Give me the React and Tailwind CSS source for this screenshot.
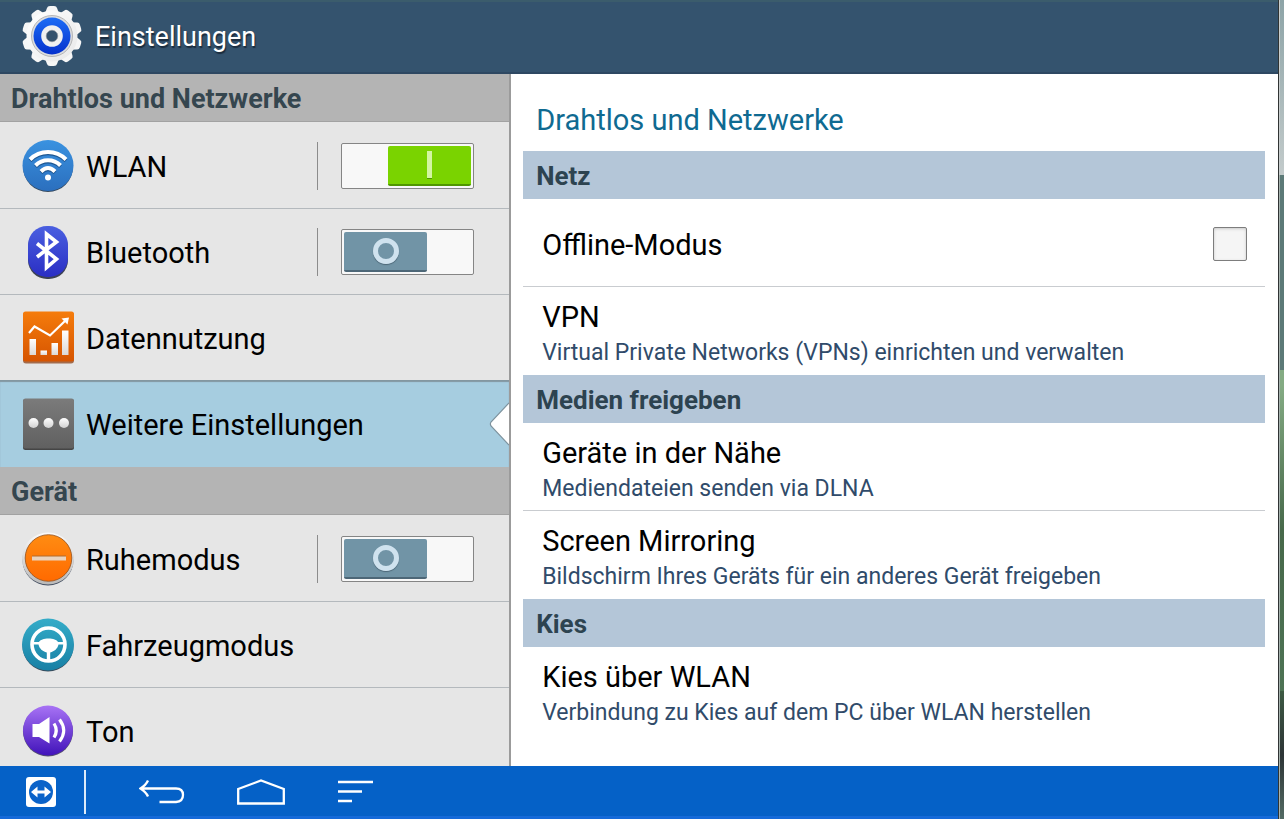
import React, { useState } from "react";

const WlanIcon = () => (
  <svg viewBox="0 0 52 54" className="h-[54px] w-[52px]" aria-hidden="true">
    <defs>
      <linearGradient id="wlan" x1="0" y1="0" x2="0" y2="1">
        <stop offset="0" stopColor="#3a92e0" />
        <stop offset="1" stopColor="#2b6fbe" />
      </linearGradient>
    </defs>
    <circle cx="26" cy="28" r="25" fill="#34495f" />
    <circle cx="26" cy="26.5" r="25.500" fill="url(#wlan)" />
    <g fill="none" stroke="#1d5590" strokeWidth="4" transform="translate(0 1.2)">
      <path d="M8 20.500C18 10.500 34 10.500 44 20.500" />
      <path d="M13.500 26.500C20.500 19.500 31.500 19.500 38.500 26.500" />
      <path d="M19 32.500C23.500 28 28.500 28 33 32.500" />
    </g>
    <g fill="none" stroke="#fff" strokeWidth="4">
      <path d="M8 20.500C18 10.500 34 10.500 44 20.500" />
      <path d="M13.500 26.500C20.500 19.500 31.500 19.500 38.500 26.500" />
      <path d="M19 32.500C23.500 28 28.500 28 33 32.500" />
    </g>
    <circle cx="26" cy="38.500" r="3" fill="#fff" />
  </svg>
);

const BluetoothIcon = () => (
  <svg viewBox="0 0 52 54" className="h-[54px] w-[52px]" aria-hidden="true">
    <defs>
      <linearGradient id="bt" x1="0" y1="0" x2="0" y2="1">
        <stop offset="0" stopColor="#4a5fe0" />
        <stop offset="1" stopColor="#2a2ec4" />
      </linearGradient>
    </defs>
    <rect x="6" y="3" width="40" height="51" rx="19" fill="#3c4254" />
    <rect x="6" y="1" width="40" height="51" rx="19" fill="url(#bt)" />
    <path d="M15 18.500L34.500 34 24.500 42.500V9L34.500 17 15 32" fill="none" stroke="#fff" strokeWidth="3.600" />
  </svg>
);

const DataIcon = () => (
  <svg viewBox="0 0 52 54" className="h-[54px] w-[52px]" aria-hidden="true">
    <defs>
      <linearGradient id="data" x1="0" y1="0" x2="0" y2="1">
        <stop offset="0" stopColor="#f57c0c" />
        <stop offset="1" stopColor="#d65400" />
      </linearGradient>
      <linearGradient id="bars" x1="0" y1="0" x2="0" y2="1">
        <stop offset="0" stopColor="#fff" />
        <stop offset="1" stopColor="#dcd8d6" />
      </linearGradient>
    </defs>
    <rect x="1" y="1.500" width="51" height="51" rx="3" fill="#a36b4b" />
    <rect x="1" y=".500" width="51" height="50" rx="2.500" fill="url(#data)" />
    <g fill="url(#bars)">
      <rect x="7.500" y="28" width="6.500" height="16" />
      <rect x="18.500" y="39.500" width="6.500" height="4.500" />
      <rect x="29.500" y="32" width="6.500" height="12" />
      <rect x="40" y="19.500" width="6.500" height="24.500" />
    </g>
    <path d="M7 22L12.500 15.500 28 24.500 44 9" fill="none" stroke="#fff" strokeWidth="2.200" />
    <path d="M47 6.500L45.500 13.500 39.500 7.500Z" fill="#fff" />
  </svg>
);

const MoreIcon = () => (
  <svg viewBox="0 0 52 54" className="h-[54px] w-[52px]" aria-hidden="true">
    <defs>
      <linearGradient id="more" x1="0" y1="0" x2="0" y2="1">
        <stop offset="0" stopColor="#7b7b7b" />
        <stop offset="1" stopColor="#606060" />
      </linearGradient>
      <linearGradient id="dots" x1="0" y1="0" x2="0" y2="1">
        <stop offset="0" stopColor="#fff" />
        <stop offset="1" stopColor="#d2d2d2" />
      </linearGradient>
    </defs>
    <rect x="1" y="2" width="51" height="51" rx="2.500" fill="#454545" />
    <rect x="1" y="1.500" width="51" height="50" rx="2.500" fill="url(#more)" />
    <circle cx="11.500" cy="26" r="5" fill="url(#dots)" />
    <circle cx="26.500" cy="26" r="5" fill="url(#dots)" />
    <circle cx="42" cy="26" r="5" fill="url(#dots)" />
  </svg>
);

const BlockIcon = () => (
  <svg viewBox="0 0 52 54" className="h-[54px] w-[52px]" aria-hidden="true">
    <defs>
      <linearGradient id="block" x1="0" y1="0" x2="0" y2="1">
        <stop offset="0" stopColor="#ff8c12" />
        <stop offset="1" stopColor="#ff6a00" />
      </linearGradient>
      <linearGradient id="rim" x1="0" y1="0" x2="0" y2="1">
        <stop offset="0" stopColor="#fafafa" />
        <stop offset="1" stopColor="#b9b9b9" />
      </linearGradient>
    </defs>
    <circle cx="26" cy="28" r="25.500" fill="#424d60" />
    <circle cx="26" cy="26.500" r="26" fill="url(#rim)" />
    <circle cx="26.500" cy="26" r="23.300" fill="url(#block)" stroke="#94501c" strokeWidth=".8" />
    <rect x="10" y="24" width="34" height="4.500" fill="#e9d2bd" />
    <rect x="10" y="23.500" width="34" height="1" fill="#b36a2a" />
  </svg>
);

const WheelIcon = () => (
  <svg viewBox="0 0 52 54" className="h-[54px] w-[52px]" aria-hidden="true">
    <defs>
      <linearGradient id="wheel" x1="0" y1="0" x2="0" y2="1">
        <stop offset="0" stopColor="#35acc8" />
        <stop offset="1" stopColor="#1880a5" />
      </linearGradient>
    </defs>
    <circle cx="26" cy="28" r="25.500" fill="#394a5a" />
    <circle cx="26" cy="26.500" r="26" fill="url(#wheel)" />
    <circle cx="26.500" cy="26.500" r="16.500" fill="none" stroke="#fff" strokeWidth="3.600" />
    <path d="M10 24H17C18 22 22 20.500 26.500 20.500S35 22 36 24H43V26.500H36.500C35.500 31 32.500 33 28.200 34.500V42H24.800V34.500C20.500 33 17.500 31 16.500 26.500H10Z" fill="#fff" />
  </svg>
);

const SoundIcon = () => (
  <svg viewBox="0 0 52 54" className="h-[54px] w-[52px]" aria-hidden="true">
    <defs>
      <linearGradient id="sound" x1="0" y1="0" x2="0" y2="1">
        <stop offset="0" stopColor="#a873f5" />
        <stop offset="1" stopColor="#4113ba" />
      </linearGradient>
    </defs>
    <circle cx="26" cy="27.500" r="25" fill="#555070" />
    <circle cx="26" cy="26.500" r="25" fill="url(#sound)" />
    <path d="M10.500 20H17L27.500 13V39.500L17 33H10.500Z" fill="#fff" />
    <path d="M32 19.500Q36.500 26.500 32 33.500M37.500 15.500Q46 26.500 37.500 37.500" fill="none" stroke="#fff" strokeWidth="3.200" />
  </svg>
);

const GearIcon = () => (
  <svg viewBox="0 0 60 62" className="h-[62px] w-[60px]" aria-hidden="true">
    <defs>
      <linearGradient id="gear" x1="0" y1="0" x2="1" y2="1">
        <stop offset="0" stopColor="#fff" />
        <stop offset="1" stopColor="#e8e8e8" />
      </linearGradient>
      <linearGradient id="gearBlue" x1="0" y1="0" x2="0" y2="1">
        <stop offset="0" stopColor="#1d6cf5" />
        <stop offset="1" stopColor="#0531cd" />
      </linearGradient>
    </defs>
    <g fill="#f6f6f6">
      {[0, 36, 72, 108, 144, 180, 216, 252, 288, 324].map((angle) => (
        <path key={angle} d="M22 10L25 2Q25.500 0 28 0H32Q34.500 0 35 2L38 10Z" transform={`rotate(${angle} 30 30)`} />
      ))}
    </g>
    <circle cx="30" cy="30" r="25.500" fill="url(#gear)" />
    <circle cx="30" cy="30" r="20.500" fill="#dcdddf" stroke="#a8a8a8" strokeWidth=".8" />
    <circle cx="30" cy="30" r="18.500" fill="url(#gearBlue)" />
    <circle cx="30" cy="30" r="8.300" fill="#34516c" stroke="#f0f0f0" strokeWidth="5" />
    <circle cx="30" cy="30" r="5.800" fill="#34516c" stroke="#a5a8ad" strokeWidth=".7" />
  </svg>
);

const deviceSections = [
  {
    title: "Drahtlos und Netzwerke",
    items: [
      { id: "wlan", label: "WLAN", icon: WlanIcon, toggle: true },
      { id: "bluetooth", label: "Bluetooth", icon: BluetoothIcon, toggle: true },
      { id: "daten", label: "Datennutzung", icon: DataIcon },
      { id: "weitere", label: "Weitere Einstellungen", icon: MoreIcon, active: true },
    ],
  },
  {
    title: "Gerät",
    items: [
      { id: "ruhemodus", label: "Ruhemodus", icon: BlockIcon, toggle: true },
      { id: "fahrzeug", label: "Fahrzeugmodus", icon: WheelIcon },
      { id: "ton", label: "Ton", icon: SoundIcon },
    ],
  },
];

const detailSections = [
  {
    title: "Netz",
    items: [
      { label: "Offline-Modus", checkbox: true },
      { label: "VPN", text: "Virtual Private Networks (VPNs) einrichten und verwalten" },
    ],
  },
  {
    title: "Medien freigeben",
    items: [
      { label: "Geräte in der Nähe", text: "Mediendateien senden via DLNA" },
      { label: "Screen Mirroring", text: "Bildschirm Ihres Geräts für ein anderes Gerät freigeben" },
    ],
  },
  {
    title: "Kies",
    items: [{ label: "Kies über WLAN", text: "Verbindung zu Kies auf dem PC über WLAN herstellen" }],
  },
];

function Toggle({ id, label, checked, onChange }) {
  return (
    <div className="flex h-12 items-center border-l border-[#8c8c8c] pl-[23px]">
      <label htmlFor={id} className="relative block h-[46px] w-[133px] cursor-pointer">
        <input
          id={id}
          type="checkbox"
          role="switch"
          aria-label={label}
          checked={checked}
          onChange={onChange}
          className="block h-full w-full appearance-none rounded-xs border border-[#858585] bg-[#f8f8f8]"
        />
        {checked ? (
          <span className="pointer-events-none absolute top-[3px] right-[3px] flex h-10 w-[83px] items-center justify-center rounded-xs border-b-2 border-[#4f9600] bg-[#7ad300]">
            <span className="h-7 w-[5px] border-b border-[#4f9600] bg-[#d3f5a2]" />
          </span>
        ) : (
          <span className="pointer-events-none absolute top-[3px] left-[3px] flex h-10 w-[83px] items-center justify-center rounded-xs border-b-2 border-[#4d6777] bg-[#7194a6]">
            <span className="size-[26px] rounded-full border-5 border-[#cfe2ee] shadow-[0_1px_1px_#4d6777]" />
          </span>
        )}
      </label>
    </div>
  );
}

function SidebarItem({ item, checked, onToggle }) {
  const Icon = item.icon;

  return (
    <li
      className={
        item.active
          ? "relative flex h-[87px] items-center bg-[#a6cde0] pr-[35px] pl-[22px] shadow-[inset_0_2px_1px_#8397a1]"
          : "flex h-[86px] items-center border-t border-[#b4b9bd] pr-[35px] pl-[22px] first:border-transparent"
      }
    >
      <a href={`#${item.id}`} className="flex flex-1 items-center gap-3">
        <Icon />
        <span className="pt-0.5 text-[29px] leading-9 text-black">{item.label}</span>
      </a>
      {item.toggle && (
        <Toggle id={`${item.id}-switch`} label={item.label} checked={checked} onChange={onToggle} />
      )}
      {item.active && (
        <svg viewBox="0 0 20 44" className="absolute right-0 h-11 w-5" aria-hidden="true">
          <path d="M20 1L2 20Q.800 22 2 24L20 43" fill="#fff" stroke="#7d929d" strokeWidth="1.200" />
        </svg>
      )}
    </li>
  );
}

function DetailItem({ item, checked, onChange }) {
  if (item.checkbox) {
    return (
      <li className="flex h-[88px] items-center justify-between border-b border-[#c9ccd0] pt-0.5 pr-[18px] pl-[19px]">
        <label htmlFor="offline" className="pt-0.5 text-[29px] leading-9 text-black">
          {item.label}
        </label>
        <input
          id="offline"
          type="checkbox"
          checked={checked}
          onChange={onChange}
          className="size-[34px] appearance-none rounded-xs border border-[#7d7d7d] bg-[#f5f5f5] shadow-[inset_0_1px_3px_#c8c8c8] checked:bg-[#7ad300]"
        />
      </li>
    );
  }

  return (
    <li className="h-[88px] border-b border-[#c9ccd0] pt-[13px] pl-[19px] last:border-b-0">
      <a href="#detail" className="block">
        <span className="block text-[29px] leading-[35px] text-black">{item.label}</span>
        <span className="block text-[23px] leading-[35px] text-[#304b6a]">{item.text}</span>
      </a>
    </li>
  );
}

export default function App() {
  const [switches, setSwitches] = useState({ wlan: true, bluetooth: false, ruhemodus: false });
  const [offline, setOffline] = useState(false);

  const toggleSwitch = (id) => {
    setSwitches((prev) => ({ ...prev, [id]: !prev[id] }));
  };

  return (
    <div className="flex h-screen overflow-hidden font-[Roboto,sans-serif]">
      <div className="flex min-w-0 flex-1 flex-col">
        <header className="flex h-[74px] shrink-0 items-center gap-[13px] border-t-2 border-b-2 border-t-[#3b5c6c] border-b-[#2e4862] bg-[#34536e] pl-[22px]">
          <GearIcon />
          <h1 className="text-[27px] leading-9 text-white [text-shadow:1px_2px_1px_#1b2c3d]">Einstellungen</h1>
        </header>

        <div className="flex min-h-0 flex-1">
          <nav className="w-2/5 shrink-0 overflow-hidden border-r-2 border-[#9b9b9b] bg-[#e6e6e6]" aria-label="Einstellungen">
            {deviceSections.map((section) => (
              <section key={section.title}>
                <h2 className="flex h-12 items-center border-b border-[#a2a2a2] bg-[#b4b4b4] pt-0.5 pl-[11px] text-[27px] leading-9 font-bold text-[#35464f]">
                  {section.title}
                </h2>
                <ul>
                  {section.items.map((item) => (
                    <SidebarItem
                      key={item.id}
                      item={item}
                      checked={switches[item.id]}
                      onToggle={() => toggleSwitch(item.id)}
                    />
                  ))}
                </ul>
              </section>
            ))}
          </nav>

          <main className="min-w-0 flex-1 overflow-hidden bg-white pr-[13px] pl-3">
            <h2 className="flex h-[77px] items-end pb-[13px] pl-[13px] text-[29px] leading-9 text-[#0f6a91]">
              Drahtlos und Netzwerke
            </h2>
            {detailSections.map((section) => (
              <section key={section.title}>
                <h3 className="flex h-12 items-center bg-[#b4c6d8] pt-0.5 pl-[13px] text-[26px] leading-9 font-bold text-[#2d4350]">
                  {section.title}
                </h3>
                <ul>
                  {section.items.map((item) => (
                    <DetailItem
                      key={item.label}
                      item={item}
                      checked={offline}
                      onChange={(e) => setOffline(e.target.checked)}
                    />
                  ))}
                </ul>
              </section>
            ))}
          </main>
        </div>

        {/* System bar */}
        <footer className="flex h-[53px] shrink-0 items-center border-b-3 border-[#156ad9] bg-[#0561c7] pt-0.5 pl-[26px] text-white">
          <button type="button" aria-label="TeamViewer">
            <svg viewBox="0 0 30 30" className="size-[30px]">
              <rect width="30" height="30" rx="3" fill="#fff" />
              <circle cx="15" cy="15" r="12" fill="#0b63c9" />
              <path d="M5 15L11.500 9.500V13.500H18.500V9.500L25 15L18.500 20.500V16.500H11.500V20.500Z" fill="#fff" />
            </svg>
          </button>
          <span className="ml-7 h-11 w-0.5 bg-[#dceafa]" />
          <button type="button" aria-label="Zurück" className="ml-[53px]">
            <svg viewBox="0 0 46 26" className="h-[26px] w-[46px]" fill="none" stroke="currentColor" strokeWidth="2.300">
              <path d="M9 1.500Q7 6 1.500 9.500Q7 13 9 17.500M2 9.500H37Q44 9.500 44 16T37 23H20.500" />
            </svg>
          </button>
          <button type="button" aria-label="Startseite" className="ml-[52px]">
            <svg viewBox="0 0 48 26" className="h-[26px] w-12" fill="none" stroke="currentColor" strokeWidth="2.300">
              <path d="M1.200 24.500V10L24 1.500L46.800 10V24.500Z" />
            </svg>
          </button>
          <button type="button" aria-label="Letzte Apps" className="ml-[53px]">
            <svg viewBox="0 0 35 26" className="h-[26px] w-[35px]" fill="none" stroke="currentColor" strokeWidth="2.500">
              <path d="M0 3H35M0 12.500H24M0 22H14" />
            </svg>
          </button>
        </footer>
      </div>

      {/* Desktop edge beside the window */}
      <div className="flex w-1.5 shrink-0 flex-col border-l border-[#303434]">
        <div className="h-[175px] shrink-0 border-l border-[#c8cdcd] bg-linear-to-b from-[#8da4a7] to-[#c3cbcb]" />
        <div className="h-[195px] shrink-0 border-l border-[#a6b3ae] bg-[#5c7a77]" />
        <div className="flex-1 border-l border-[#a6b3ae] bg-linear-to-b from-[#84ab83] from-5% via-[#47694a] via-50% to-[#4d7354]" />
        <div className="h-32 shrink-0 border-l border-[#a6b3ae] bg-linear-to-b from-[#3d5a43] via-[#2d3536] to-[#536b64]" />
      </div>
    </div>
  );
}
